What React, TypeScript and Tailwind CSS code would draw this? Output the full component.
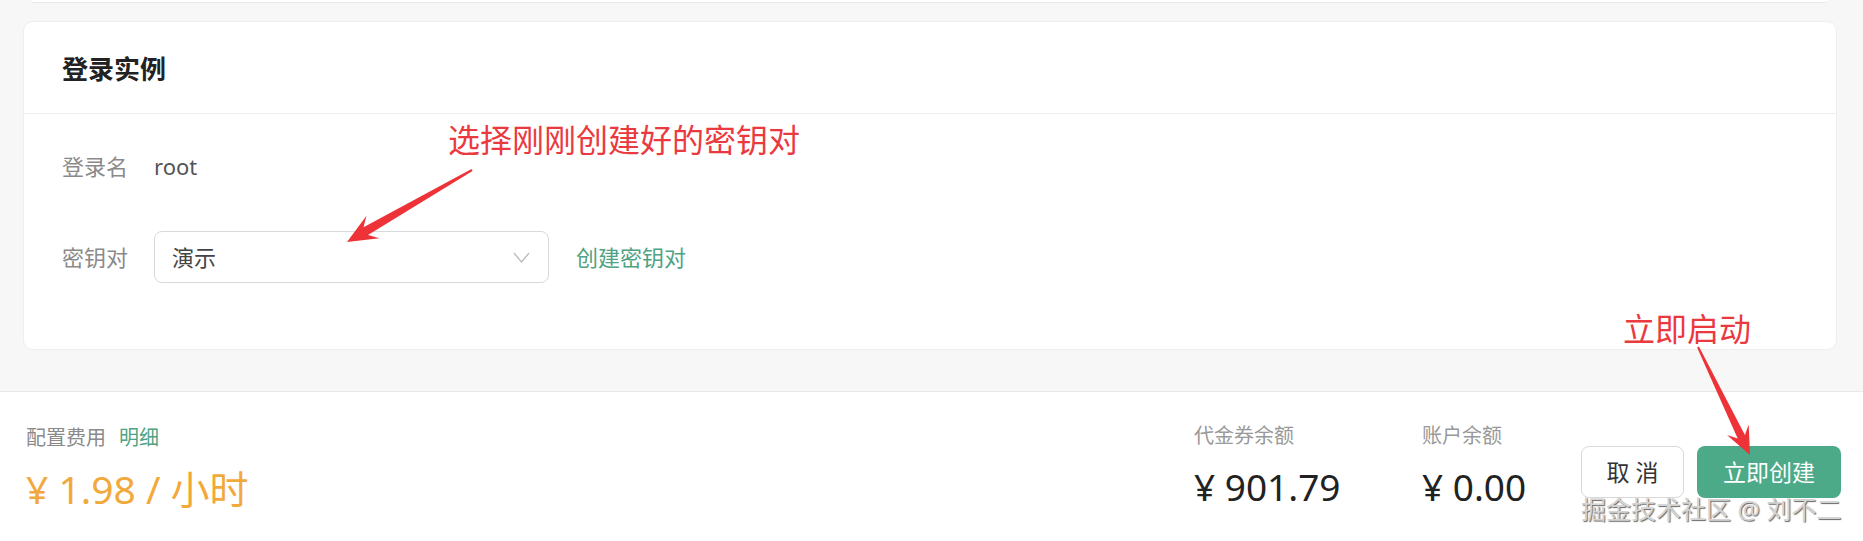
import React from 'react';

type Pt = [number, number];

// tapered annotation arrow, tail -> tip
const arrowPoints = (tail: Pt, tip: Pt, head = 30, wing = 13, neck = 4.5, tailW = 1): string => {
  const dx = tip[0] - tail[0];
  const dy = tip[1] - tail[1];
  const len = Math.hypot(dx, dy);
  const ux = dx / len;
  const uy = dy / len;
  const nx = -uy;
  const ny = ux;
  const at = (d: number, w: number): Pt => [tip[0] - ux * d + nx * w, tip[1] - uy * d + ny * w];
  const pts: Pt[] = [
    [tail[0] + nx * tailW, tail[1] + ny * tailW],
    at(head * 0.72, neck),
    at(head, wing),
    tip,
    at(head, -wing),
    at(head * 0.72, -neck),
    [tail[0] - nx * tailW, tail[1] - ny * tailW],
  ];
  return pts.map((p) => `${p[0].toFixed(1)},${p[1].toFixed(1)}`).join(' ');
};

const Annotations: React.FC = () => (
  <>
    <svg className="absolute inset-0 pointer-events-none" width="1863" height="541">
      <polygon points={arrowPoints([472, 170], [347, 242])} fill="#ee3338" />
      <polygon points={arrowPoints([1698, 347], [1750, 455], 28, 12, 4)} fill="#ee3338" />
    </svg>
    <div className="absolute left-[448px] top-[122px] text-[32px] leading-[36px] text-[#ea3a3f] whitespace-nowrap">
      选择刚刚创建好的密钥对
    </div>
    <div className="absolute left-[1623px] top-[311px] text-[32px] leading-[36px] text-[#ea3a3f] whitespace-nowrap">
      立即启动
    </div>
    <div className="absolute left-[1581px] top-[493px] text-[25px] leading-[32px] text-[#d4d4d4] whitespace-nowrap [text-shadow:1px_1px_1px_rgba(0,0,0,0.6)]">
      掘金技术社区 @ 刘不二
    </div>
  </>
);

const LoginCard: React.FC = () => (
  <div className="mt-[18px] ml-[23px] mr-[26px] h-[329px] rounded-[10px] bg-white border border-[#eeeeee]">
    <div className="h-[92px] border-b border-[#eeeeee] flex items-center pl-[38px] pt-[3px]">
      <h2 className="text-[26px] font-bold text-[#222222]">登录实例</h2>
    </div>
    <div className="pl-[38px] pt-[32px]">
      <div className="flex items-center h-[40px]">
        <span className="w-[92px] text-[22px] text-[#8a8a8a]">登录名</span>
        <span className="text-[22px] text-[#555555]">root</span>
      </div>
      <div className="flex items-center mt-[45px]">
        <span className="w-[92px] text-[22px] text-[#8a8a8a]">密钥对</span>
        <div className="w-[395px] h-[52px] rounded-[8px] border border-[#d9d9d9] flex items-center justify-between pl-[17px] pr-[18px]">
          <span className="text-[22px] text-[#444444]">演示</span>
          <svg width="17" height="11" viewBox="0 0 17 11" fill="none">
            <polyline points="1,1 8.5,10 16,1" stroke="#bdbdbd" strokeWidth="1.4" />
          </svg>
        </div>
        <span className="ml-[27px] text-[22px] text-[#4fa283]">创建密钥对</span>
      </div>
    </div>
  </div>
);

const Footer: React.FC = () => (
  <div className="mt-[41px] h-[150px] bg-white border-t border-[#e8e8e8] flex justify-between pl-[26px] pr-[22px]">
    <div className="pt-[32px]">
      <div className="flex items-center h-[28px] text-[20px]">
        <span className="text-[#8a8a8a]">配置费用</span>
        <span className="ml-[13px] text-[#4fa283]">明细</span>
      </div>
      <div className="mt-[14px] text-[39px] leading-[46px] text-[#f2a93b] whitespace-nowrap">
        ¥ 1.98 / 小时
      </div>
    </div>
    <div className="flex items-start">
      <div className="w-[228px] pt-[29px]">
        <div className="h-[28px] text-[20px] text-[#999999]">代金券余额</div>
        <div className="mt-[16px] text-[37px] leading-[44px] text-[#222222] whitespace-nowrap">¥ 901.79</div>
      </div>
      <div className="w-[159px] pt-[29px]">
        <div className="h-[28px] text-[20px] text-[#999999]">账户余额</div>
        <div className="mt-[16px] text-[37px] leading-[44px] text-[#222222] whitespace-nowrap">¥ 0.00</div>
      </div>
      <div className="flex gap-[13px] pt-[54px]">
        <button className="w-[103px] h-[52px] rounded-[8px] border border-[#d9d9d9] bg-white text-[23px] text-[#333333]">
          取 消
        </button>
        <button className="w-[144px] h-[52px] rounded-[8px] bg-[#4caa89] text-[23px] text-white">
          立即创建
        </button>
      </div>
    </div>
  </div>
);

export default function App() {
  return (
    <div className="relative w-full h-[541px] overflow-hidden bg-[#f7f7f8] font-['Noto_Sans','Noto_Sans_CJK_SC',sans-serif]">
      <div className="ml-[32px] mr-[36px] h-[3px] bg-white border-b border-[#eaeaea]" />
      <LoginCard />
      <Footer />
      <Annotations />
    </div>
  );
}
